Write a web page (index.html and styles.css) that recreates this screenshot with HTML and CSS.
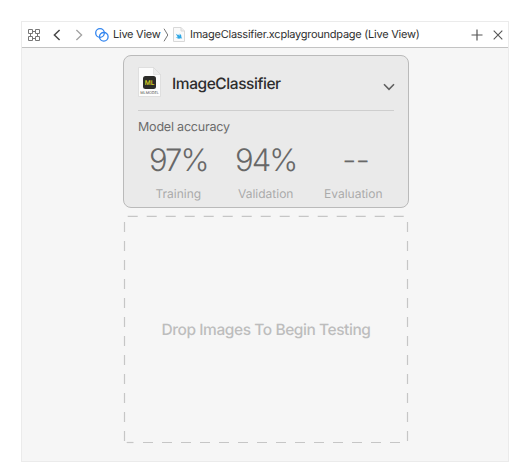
FILE: index.html
```html
<!DOCTYPE html>
<html lang="en">
<head>
<meta charset="utf-8">
<title>Live View</title>
<link rel="stylesheet" href="styles.css">
</head>
<body>
<main class="window">
  <header class="toolbar">
    <svg class="grid-icon" width="14" height="14" viewBox="0 0 14 14" fill="none" stroke="#777" stroke-width="1">
      <path d="M1.500 1.500h4v4h-4zM8.500 1.500h4v4h-4zM1.500 8.500h4v4h-4zM8.500 8.500h4v4h-4zM6 3.500h2M6 10.500h2M3.500 6v2M10.500 6v2"/>
    </svg>
    <svg class="back" width="8" height="12" viewBox="0 0 8 12" fill="none" stroke="#484848" stroke-width="1.5"><path d="M6.600 1 1.400 6l5.200 5"/></svg>
    <svg class="forward" width="8" height="12" viewBox="0 0 8 12" fill="none" stroke="#a2a2a2" stroke-width="1.3"><path d="M1.400 1l5.200 5-5.200 5"/></svg>
    <svg class="rings" width="14" height="14" viewBox="0 0 14 14" fill="none" stroke="#3486ef" stroke-width="1.3"><circle cx="5" cy="5" r="4.300"/><circle cx="8.800" cy="8.800" r="4.300"/></svg>
    <span class="crumb">Live View</span>
    <svg class="separator" width="6" height="14" viewBox="0 0 6 14" fill="none" stroke="#777" stroke-width="1"><path d="M1 .7 4.800 7 1 13.300"/></svg>
    <svg class="page-icon" width="12" height="15" viewBox="0 0 12 15">
      <path d="M.5.500H8L11.500 4v10.500H.5z" fill="#fafafa" stroke="#d8d8d8"/>
      <path d="M8 .5V4h3.500" fill="#eee" stroke="#d8d8d8"/>
      <path d="M2.800 6.800 5.400 8.600 4.300 6.800 6.700 8.700 6.600 6.500Q8.900 8 8.400 10.200L9.300 11.600 7.900 11.200Q4.900 12.500 2.700 10L4.900 10.400z" fill="#2ba6e5"/>
    </svg>
    <span class="crumb file">ImageClassifier.xcplaygroundpage (Live View)</span>
    <svg class="plus" width="12" height="12" viewBox="0 0 12 12" stroke="#555" stroke-width="1.2"><path d="M6 .5v11M.5 6h11"/></svg>
    <svg class="close" width="10" height="10" viewBox="0 0 10 10" stroke="#555" stroke-width="1.1"><path d="m.7.700 8.600 8.600M9.300.7.700 9.300"/></svg>
  </header>
  <section class="card">
    <div class="card-head">
      <svg class="model-icon" width="23" height="30" viewBox="0 0 23 30">
        <path d="M.5.500H15.500L22.500 7.500V29.500H.5z" fill="#fcfcfc" stroke="#d9d9d9" stroke-width=".8"/>
        <path d="M15.500.5V7.500h7z" fill="#ededed" stroke="#d5d5d5" stroke-width=".5"/>
        <rect x="5" y="9" width="13" height="13" rx="2.500" fill="#2c2c29"/>
        <text class="ml" x="11.500" y="18">ML</text>
        <text class="ml-label" x="11.500" y="27.300">MLMODEL</text>
      </svg>
      <h1 class="title">ImageClassifier</h1>
      <svg class="chevron" width="12" height="8" viewBox="0 0 12 8" fill="none" stroke="#606060" stroke-width="1.6"><path d="M1 1.200 6 6.300l5-5.100"/></svg>
    </div>
    <p class="caption">Model accuracy</p>
    <div class="stats">
      <div class="stat"><span class="value">97%</span><span class="label">Training</span></div>
      <div class="stat"><span class="value">94%</span><span class="label">Validation</span></div>
      <div class="stat"><span class="value dashes">--</span><span class="label">Evaluation</span></div>
    </div>
  </section>
  <section class="drop">
    <svg class="outline" width="286" height="229" viewBox="0 0 286 229" stroke="#c6c6c6" stroke-width="1.200" stroke-dasharray="10 9">
      <path d="M4.700 1.300H282"/>
      <path d="M1.500 7V226"/>
      <path d="M284.500 7V226"/>
      <path d="M3.700 227.500H10.500" stroke-dasharray="none"/>
      <path d="M20 227.500H278"/>
    </svg>
    <span class="drop-text">Drop Images To Begin Testing</span>
  </section>
</main>
</body>
</html>
```
FILE: styles.css
```css
* { box-sizing: border-box; }
body {
  margin: 0;
  padding: 21px;
  background: #fff;
  font-family: Inter, "Liberation Sans", sans-serif;
  text-rendering: geometricPrecision;
}
svg { display: block; flex: none; }
.window {
  width: 488px;
  height: 441px;
  border: 1px solid #ebebeb;
  background: #f6f6f6;
}
.toolbar {
  height: 26px;
  padding: 0 5px;
  display: flex;
  align-items: center;
  background: #fff;
  border-bottom: 1px solid #c3c3c3;
  color: #303030;
}
.back { margin-left: 12px; }
.forward { margin-left: 14px; }
.rings { margin-left: 12px; }
.crumb { margin: -2px 0 0 4px; width: 48px; font-size: 11px; line-height: 14px; letter-spacing: -0.25px; white-space: nowrap; }
.separator { margin-left: 2px; }
.page-icon { margin-left: 4px; }
.file { width: 230px; margin-left: 5px; }
.plus { margin-left: auto; }
.close { margin-left: 10px; }
.card {
  width: 286px;
  height: 153px;
  margin: 7px 0 0 101px;
  border: 1px solid #bababa;
  border-radius: 8px;
  background: #eaeaea;
}
.card-head {
  display: flex;
  align-items: center;
  height: 55px;
  margin: 0 14px;
  border-bottom: 1px solid #cecece;
}
.model-icon { margin-top: -3px; }
.ml { font-size: 6.500px; font-weight: 600; fill: #d6cf24; text-anchor: middle; }
.ml-label { font-size: 3.700px; fill: #555; text-anchor: middle; }
.title { margin: 1px 0 0 11px; font-size: 15.500px; line-height: 20px; font-weight: 550; letter-spacing: -0.43px; color: #2d2d2d; }
.chevron { margin: 7px -1px 0 auto; }
.caption { margin: 8px 14px 0; font-size: 12.500px; line-height: 18px; letter-spacing: -0.200px; color: #6c6c6c; }
.stats { display: grid; grid-template-columns: repeat(3, 87.500px); margin-left: 10.500px; }
.stat { display: flex; flex-direction: column; align-items: center; }
.value { margin-top: 4px; font-size: 31px; line-height: 40px; font-weight: 300; letter-spacing: -1.900px; color: #686868; }
.dashes { padding-left: 5px; letter-spacing: -0.5px; }
.label { margin-top: 4px; font-size: 12px; line-height: 18px; color: #ababab; }
.drop {
  position: relative;
  display: flex;
  align-items: center;
  justify-content: center;
  width: 286px;
  height: 229px;
  margin: 7px 0 0 101px;
}
.outline { position: absolute; inset: 0; }
.drop-text { font-size: 15.500px; line-height: 20px; font-weight: 500; letter-spacing: -0.430px; color: #bdbdbd; white-space: nowrap; }
```
